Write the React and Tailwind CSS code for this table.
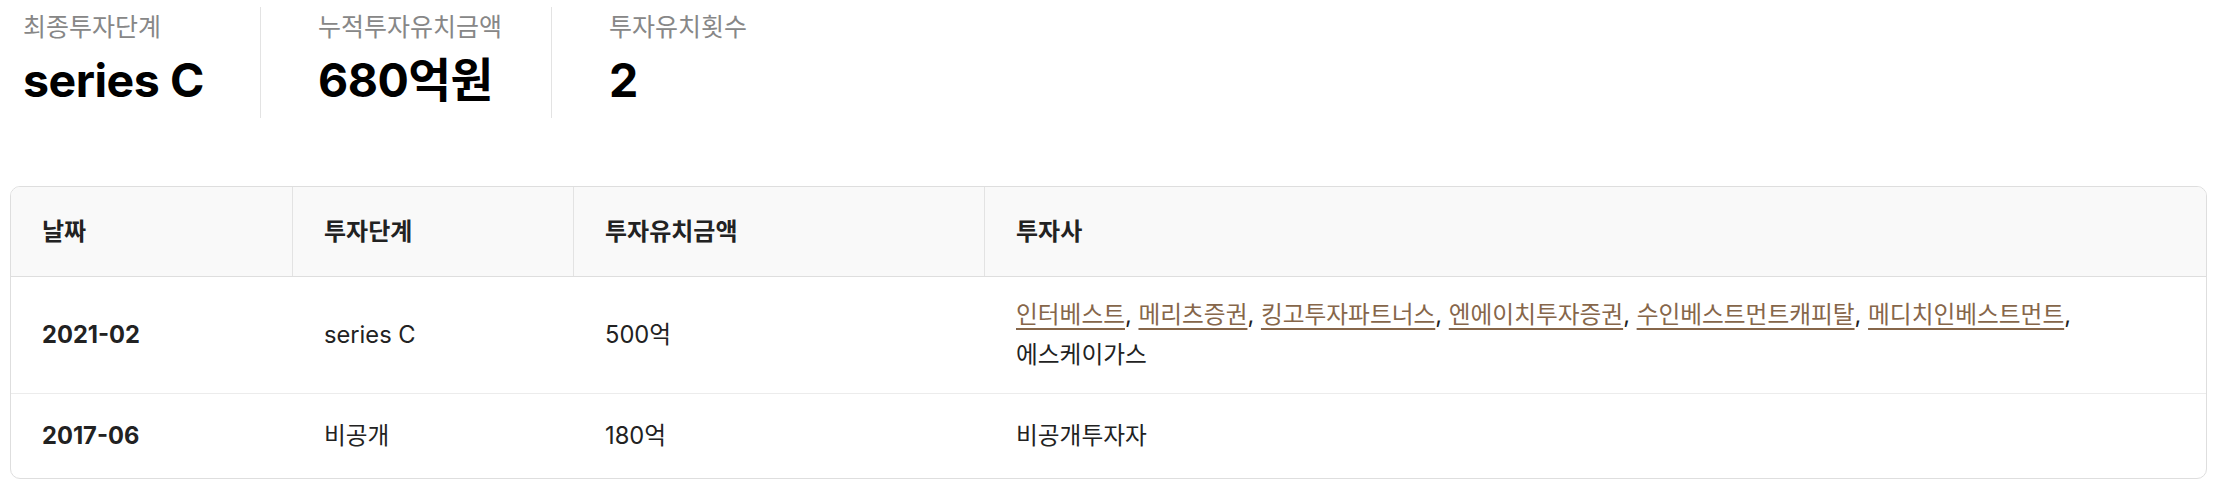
import React from "react";

const summary = [
  { label: "최종투자단계", value: "series C", width: "w-[237px]" },
  { label: "누적투자유치금액", value: "680억원", width: "w-[291px] pl-[57px] border-l" },
  { label: "투자유치횟수", value: "2", width: "pl-[57px] border-l" },
];

const rows = [
  {
    date: "2021-02",
    stage: "series C",
    amount: "500억",
    investors: [
      { name: "인터베스트", link: true },
      { name: "메리츠증권", link: true },
      { name: "킹고투자파트너스", link: true },
      { name: "엔에이치투자증권", link: true },
      { name: "수인베스트먼트캐피탈", link: true },
      { name: "메디치인베스트먼트", link: true },
      { name: "에스케이가스", link: false },
    ],
    tall: true,
  },
  {
    date: "2017-06",
    stage: "비공개",
    amount: "180억",
    investors: [{ name: "비공개투자자", link: false }],
    tall: false,
  },
];

const App = () => {
  return (
    <div
      className="w-[2214px] h-[487px] bg-white text-[#222]"
      style={{ fontFamily: 'Inter, "Noto Sans CJK KR", sans-serif' }}
    >
      {/* 상단 요약 */}
      <div className="flex pt-[7px] pl-[23px]">
        {summary.map((item) => (
          <div
            key={item.label}
            className={"flex flex-col h-[111px] border-[#e3e3e3] whitespace-nowrap " + item.width}
          >
            <span className="pt-[4px] text-[25px] leading-[32px] text-[#878787]">{item.label}</span>
            <span className="mt-[10px] text-[46.5px] leading-[54px] font-bold text-black tracking-[-0.5px]">
              {item.value}
            </span>
          </div>
        ))}
      </div>

      {/* 투자 내역 테이블 */}
      <div className="ml-[10px] mr-[7px] mt-[68px] border border-[#dedede] rounded-[10px] overflow-hidden">
        <div className="grid grid-cols-[281px_281px_411px_1fr] h-[90px] bg-[#f9f9f9] border-b border-[#dedede] text-[24px] font-bold">
          <div className="flex items-center pl-[31px]">날짜</div>
          <div className="flex items-center pl-[31px] border-l border-[#e3e3e3]">투자단계</div>
          <div className="flex items-center pl-[31px] border-l border-[#e3e3e3]">투자유치금액</div>
          <div className="flex items-center pl-[31px] border-l border-[#e3e3e3]">투자사</div>
        </div>
        {rows.map((row, r) => (
          <div
            key={row.date}
            className={
              "grid grid-cols-[281px_281px_411px_1fr] items-center text-[23.7px] leading-[40px] " +
              (row.tall ? "py-[18px] " : "h-[84px] ") +
              (r < rows.length - 1 ? "border-b border-[#ececec]" : "")
            }
          >
            <div className="pl-[31px] font-bold">{row.date}</div>
            <div className="pl-[32px]">{row.stage}</div>
            <div className="pl-[32px]">{row.amount}</div>
            <div className="pl-[32px] pr-[32px] break-keep">
              {row.investors.map((inv, k) => (
                <React.Fragment key={inv.name}>
                  {inv.link ? (
                    <a href="#" className="text-[#86664a] underline underline-offset-[5px] decoration-[2px]">
                      {inv.name}
                    </a>
                  ) : (
                    <span>{inv.name}</span>
                  )}
                  {k < row.investors.length - 1 ? ", " : ""}
                </React.Fragment>
              ))}
            </div>
          </div>
        ))}
      </div>
    </div>
  );
};

export default App;
